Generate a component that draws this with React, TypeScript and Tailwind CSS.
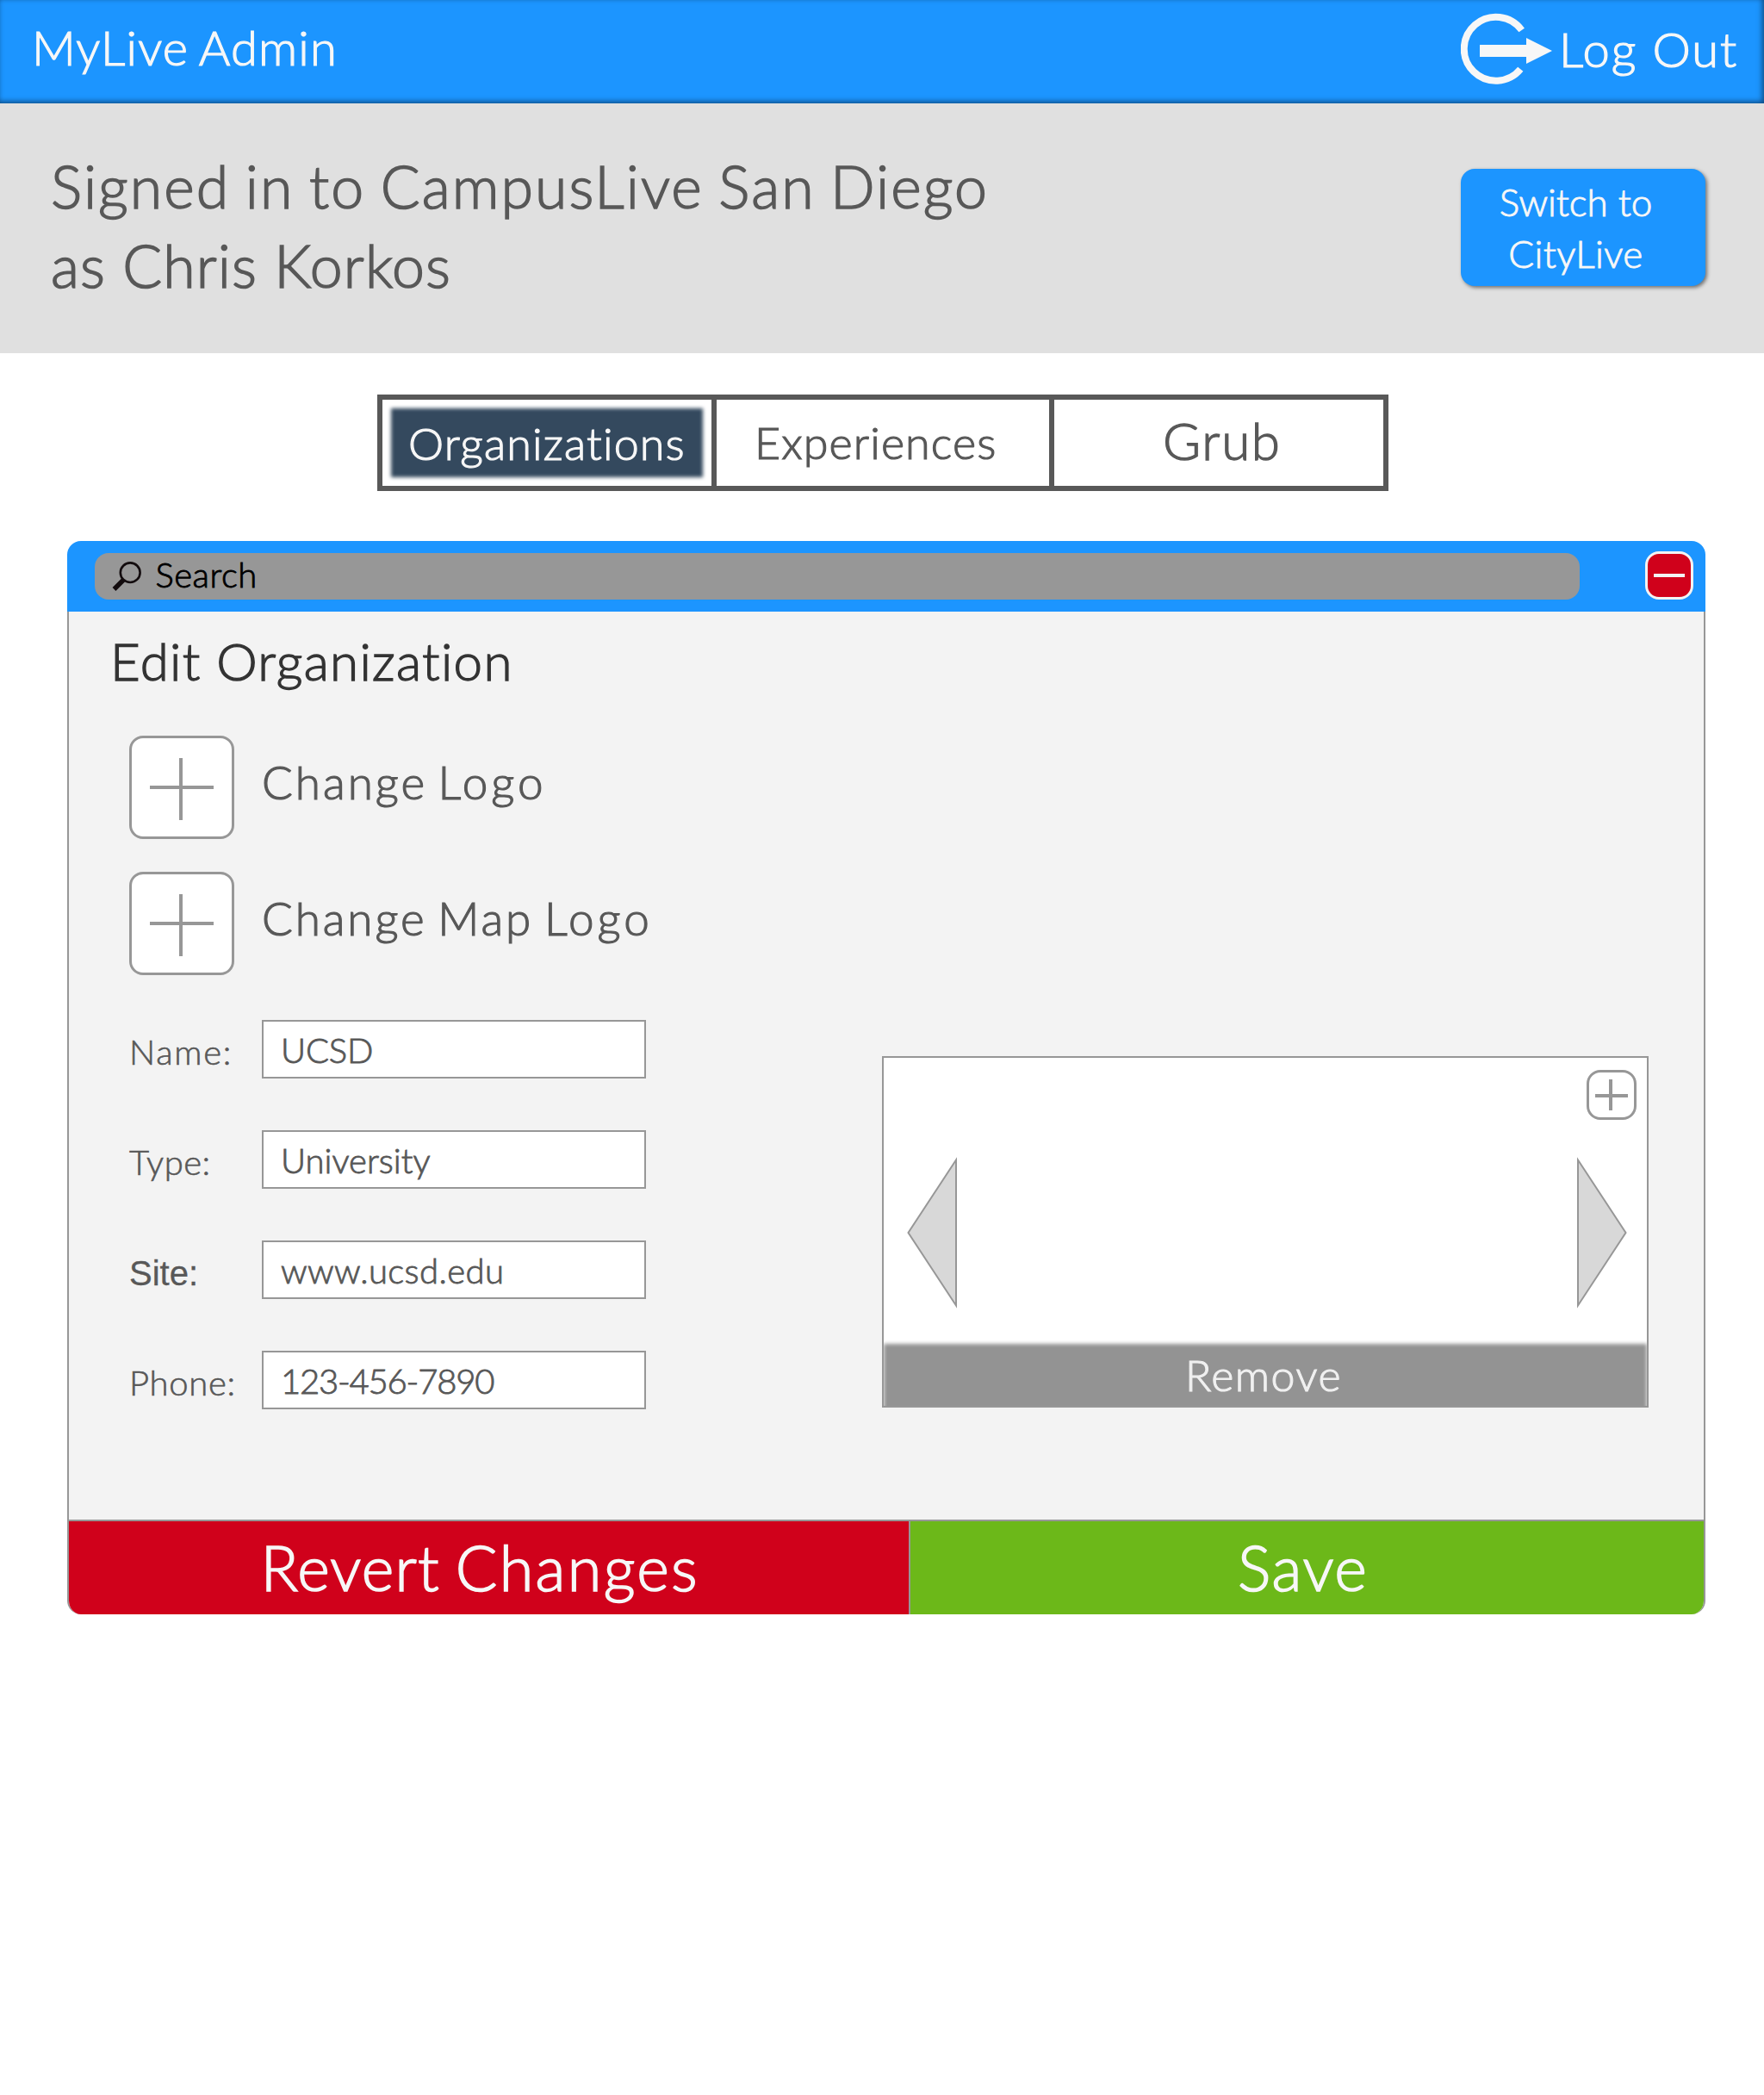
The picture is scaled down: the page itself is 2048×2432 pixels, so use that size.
import type { ReactNode } from "react";

const type = "block font-[Lato] font-light whitespace-pre [-webkit-text-stroke:0.022em]";

function Text({ className, children }: { className: string; children: ReactNode }) {
  return <span className={`${type} ${className}`}>{children}</span>;
}

function LogOutIcon() {
  return (
    <svg width="108" height="120" viewBox="0 0 108 120" className="shrink-0" fill="#f7f7f7">
      <path d="M70.7 35A37 37 0 1 0 69.3 80.3" fill="none" stroke="#f7f7f7" strokeWidth="8" />
      <path d="M22 52H76V44L106 59L76 74V66H22Z" />
    </svg>
  );
}

function SearchIcon() {
  return (
    <svg width="34" height="36" viewBox="0 0 34 36" className="ml-5 mt-[9px] shrink-0" fill="none" stroke="#130c0e">
      <ellipse cx="21.2" cy="13.7" rx="11.4" ry="11.3" strokeWidth="2.6" />
      <path d="M13.5 22L2.5 33" strokeWidth="5.4" />
    </svg>
  );
}

function AddBox({ children }: { children: ReactNode }) {
  return (
    <div className="flex h-[120px] pl-[70px]">
      <button className="h-[120px] w-[122px] shrink-0 rounded-2xl border-3 border-[#979797] bg-white">
        <svg width="116" height="114" viewBox="0 0 116 114" fill="#979797">
          <rect x="55" y="23" width="4" height="72" />
          <rect x="21" y="55" width="74" height="4" />
        </svg>
      </button>
      {children}
    </div>
  );
}

function Field({ label, value, labelClass, valueClass }: { label: string; value: string; labelClass: string; valueClass: string }) {
  return (
    <div className="flex h-[68px]">
      <label className="block w-[154px] text-[#585858]">
        <span className={labelClass}>{label}</span>
      </label>
      <div className="h-[68px] w-[446px] border-2 border-[#979797] bg-white pl-5 pt-[12.5px]">
        <Text className={`text-[40px] leading-none text-[#585858] ${valueClass}`}>{value}</Text>
      </div>
    </div>
  );
}

const fieldLabel =
  "block font-[Lato] font-light text-[40px] leading-none whitespace-pre [-webkit-text-stroke:0.016em] mt-[16.5px]";

export default function App() {
  return (
    <div className="h-[2432px] w-[2048px] overflow-hidden bg-white">
      <header className="flex h-[120px] justify-between bg-[#1c95ff] pl-9 text-[#f7f7f7] shadow-[inset_-2px_-2px_6px_rgba(0,0,0,0.5)]">
        <Text className="ml-px mt-[27px] text-[56px] leading-none tracking-[1.2px] [word-spacing:-3px]">MyLive Admin</Text>
        <a className="flex w-[352px]">
          <LogOutIcon />
          <Text className="ml-1.5 mt-[29px] text-[56px] leading-none tracking-[1.98px]">Log Out</Text>
        </a>
      </header>

      <section className="flex h-[290px] justify-between bg-[#e0e0e0] pl-[59px] pr-[68px] text-[#585858]">
        <div className="pt-[50px]">
          <Text className="text-[68px] leading-[92px] tracking-[2.05px] [word-spacing:-3px]">Signed in to CampusLive San Diego</Text>
          <Text className="text-[68px] leading-[92px] tracking-[1.02px]">as Chris Korkos</Text>
        </div>
        <button className="mt-[76px] block h-[136px] w-[284px] rounded-2xl bg-[#1c95ff] pr-[17px] text-center text-[#f7f7f7] shadow-[2px_2px_4px_rgba(0,0,0,0.5)]">
          <Text className="text-[44px] leading-[60px]">Switch to</Text>
          <Text className="text-[44px] leading-[60px] tracking-[0.47px]">CityLive</Text>
        </button>
      </section>

      <nav className="ml-[438px] mt-12 flex h-28 w-[1174px] border-6 border-[#585858] text-[#585858]">
        <div className="relative w-[388px] border-r-6 border-[#585858]">
          <span className="absolute left-[10px] top-[10px] h-20 w-[362px] bg-[#34495e] blur-[2px]" />
          <Text className="relative ml-[30px] mt-[24px] text-[52px] leading-none tracking-[1.15px] text-[#f7f7f7]">Organizations</Text>
        </div>
        <div className="w-[392px] border-r-6 border-[#585858]">
          <Text className="ml-[44px] mt-[23px] text-[52px] leading-none tracking-[1.1px]">Experiences</Text>
        </div>
        <div className="grow">
          <Text className="ml-[126px] mt-[17px] text-[60px] leading-none tracking-[1.7px]">Grub</Text>
        </div>
      </nav>

      <main className="ml-[78px] mt-[58px] w-[1902px]">
        <div className="flex h-[82px] rounded-t-2xl bg-[#1c95ff]">
          <div className="ml-8 mt-[14px] flex h-[54px] w-[1724px] rounded-2xl bg-[#979797]">
            <SearchIcon />
            <Text className="ml-[16.5px] mt-[5px] text-[40px] leading-none tracking-[0.5px] text-black">Search</Text>
          </div>
          <button className="ml-[76px] mt-3 flex size-14 items-center justify-center rounded-2xl border-3 border-[#f3f3f3] bg-[#d0011b]">
            <span className="h-1 w-9 bg-[#f3f3f3]" />
          </button>
        </div>

        <div className="h-[1054px] border-x-2 border-[#979797] bg-[#f3f3f3]">
          <h1 className="pl-12 pt-[27px]">
            <Text className="text-[60px] leading-none tracking-[1.33px] text-[#333333]">Edit Organization</Text>
          </h1>
          <div className="mt-[57px] flex flex-col gap-[38px]">
            <AddBox>
              <Text className="ml-8 mt-[27px] text-[53px] leading-none tracking-[3px] text-[#585858] [word-spacing:-5px]">
                Change <span className="tracking-[4px]">Logo</span>
              </Text>
            </AddBox>
            <AddBox>
              <Text className="ml-8 mt-[27px] text-[53px] leading-none tracking-[2.9px] text-[#585858] [word-spacing:-4.5px]">
                Change Map <span className="tracking-[4px]">Logo</span>
              </Text>
            </AddBox>
          </div>

          <div className="mt-[52px] flex justify-between pl-[70px] pr-16">
            <div className="flex flex-col gap-[60px]">
              <Field label="Name:" value="UCSD" labelClass={`${fieldLabel} tracking-[1.7px]`} valueClass="tracking-[-0.17px]" />
              <Field label="Type:" value="University" labelClass={`${fieldLabel} tracking-[0.5px]`} valueClass="tracking-0" />
              <Field
                label="Site:"
                value="www.ucsd.edu"
                labelClass="block mt-[18px] font-['Liberation_Sans'] text-[40px] leading-none [-webkit-text-stroke:0.3px]"
                valueClass="tracking-[0.42px]"
              />
              <Field label="Phone:" value="123-456-7890" labelClass={`${fieldLabel} tracking-[0.7px]`} valueClass="tracking-[-1.2px]" />
            </div>

            <div className="relative mt-[42px] h-[408px] w-[890px] overflow-hidden border-2 border-[#979797] bg-white">
              <button className="absolute right-3 top-3.5 size-[58px] rounded-2xl border-3 border-[#979797]">
                <svg width="52" height="52" viewBox="0 0 52 52" fill="#979797">
                  <rect x="23" y="8" width="4" height="36" />
                  <rect x="7" y="25" width="38" height="4" />
                </svg>
              </button>
              <div className="flex h-[332px] justify-between pl-[26px] pr-[22px] pt-[113px]">
                <svg width="60" height="180" viewBox="0 0 60 180" fill="#d8d8d8" stroke="#979797" strokeWidth="2">
                  <path d="M58 5.5L2.5 90L58 174.5Z" />
                </svg>
                <svg width="60" height="180" viewBox="0 0 60 180" fill="#d8d8d8" stroke="#979797" strokeWidth="2">
                  <path d="M2 5.5L57.5 90L2 174.5Z" />
                </svg>
              </div>
              <div className="relative h-[72px]">
                <span className="absolute -bottom-3 left-0 right-0 top-0 bg-[#939393] blur-[2px]" />
                <Text className="relative pl-[350px] pt-[10.5px] text-[50px] leading-none tracking-[1.5px] text-[#f0f0f0]">Remove</Text>
              </div>
            </div>
          </div>
        </div>

        <div className="flex h-[110px] overflow-hidden rounded-b-2xl border-x-2 border-t-2 border-[#979797] text-[#f7f7f7]">
          <button className="flex w-[977px] items-start border-r-2 border-[#979797] bg-[#d0011b]">
            <Text className="ml-[222.5px] mt-[17px] text-[72px] leading-none tracking-[1.2px] [word-spacing:-3px]">
              Revert <span className="tracking-[2.3px]">Changes</span>
            </Text>
          </button>
          <button className="flex grow items-start bg-[#6cb819]">
            <Text className="ml-[380px] mt-[17px] text-[72px] leading-none tracking-[1.6px]">Save</Text>
          </button>
        </div>
      </main>
    </div>
  );
}
